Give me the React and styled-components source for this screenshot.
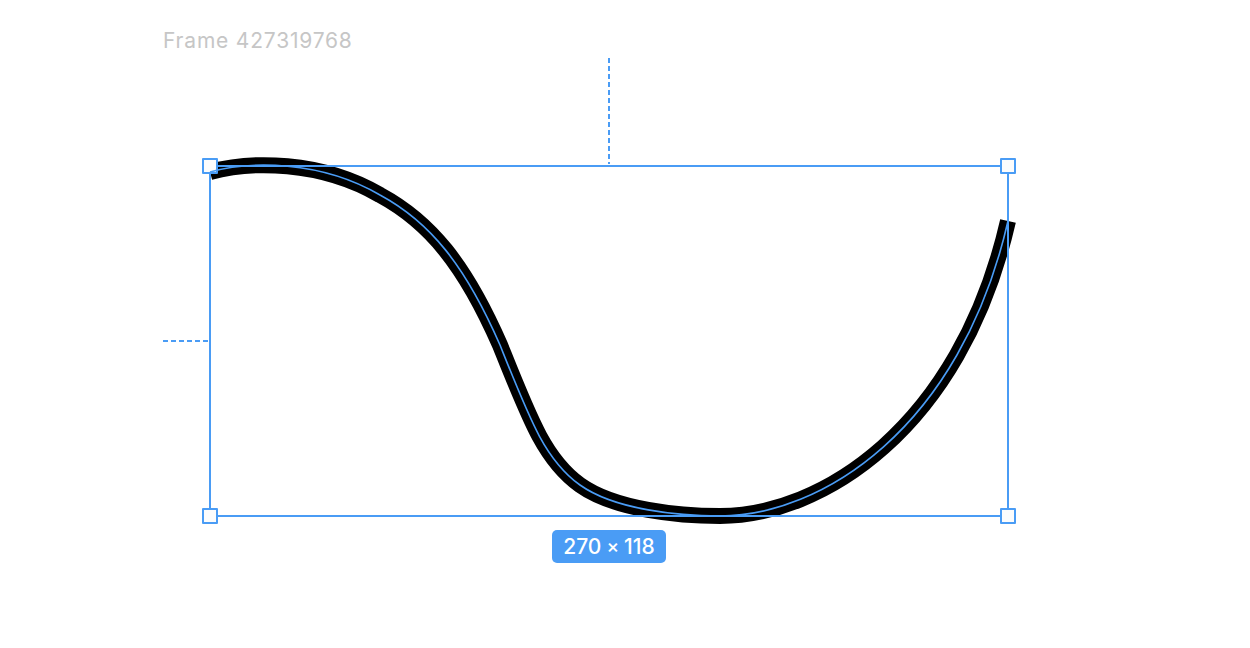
import styled, { createGlobalStyle } from "styled-components";

const BLUE = "#4a9cf5";

const GlobalStyle = createGlobalStyle`
  html, body {
    margin: 0;
    padding: 0;
    background: #ffffff;
  }
  body {
    font-family: Inter, "Open Sans", sans-serif;
  }
`;

/* Editor canvas: the label and the selected frame flow from its top-left padding */

const Canvas = styled.div`
  position: relative;
  width: 1250px;
  height: 648px;
  box-sizing: border-box;
  padding: 29px 0 0 163px;
  display: flex;
  flex-direction: column;
  gap: 5px;
  overflow: hidden;
  background: #ffffff;
`;

const FrameLabel = styled.div`
  font-size: 21px;
  line-height: 24px;
  letter-spacing: 0.8px;
  color: #c6c6c6;
  white-space: nowrap;
`;

/* The vector sits on the canvas at its own coordinates */
const Drawing = styled.svg`
  position: absolute;
  left: 0;
  top: 0;
  width: 1250px;
  height: 648px;
  pointer-events: none;
`;

/* guides | selection box | size badge */
const SelectionGroup = styled.div`
  display: grid;
  grid-template-columns: 46px 800px;
  grid-template-rows: 107px 352px auto;
`;

const Guide = styled.div`
  grid-column: ${(p) => (p.$vertical ? 2 : 1)};
  grid-row: ${(p) => (p.$vertical ? 1 : 2)};
  justify-self: ${(p) => (p.$vertical ? "center" : "start")};
  align-self: ${(p) => (p.$vertical ? "start" : "center")};
  width: ${(p) => (p.$vertical ? "1.5px" : "45px")};
  height: ${(p) => (p.$vertical ? "106px" : "1.5px")};
  background: repeating-linear-gradient(
    ${(p) => (p.$vertical ? "to bottom" : "to right")},
    ${BLUE} 0 5px,
    transparent 5px 8px
  );
`;

const SelectionBox = styled.div`
  grid-column: 2;
  grid-row: 2;
  position: relative;
  box-sizing: border-box;
  border: 2px solid ${BLUE};
`;

const Handle = styled.span`
  position: absolute;
  left: ${(p) => (p.$right ? "100%" : "0")};
  top: ${(p) => (p.$bottom ? "100%" : "0")};
  width: 16px;
  height: 16px;
  box-sizing: border-box;
  transform: translate(-50%, -50%);
  margin-left: ${(p) => (p.$right ? "1px" : "-1px")};
  margin-top: ${(p) => (p.$bottom ? "1px" : "-1px")};
  background: #fcfcfc;
  border: 2px solid ${BLUE};
  border-radius: 1px;
`;

const SizeBadge = styled.div`
  grid-column: 2;
  grid-row: 3;
  justify-self: center;
  margin-top: 13px;
  width: 114px;
  height: 33px;
  display: flex;
  align-items: center;
  justify-content: center;
  gap: 5px;
  border-radius: 5px;
  background: ${BLUE};
  color: #ffffff;
  font-size: 21px;
  font-weight: 500;
  white-space: nowrap;

  span {
    font-size: 19px;
  }
`;

const CURVE =
  "M 210 172 C 250 161, 320 160, 380 195 C 430 222, 465 265, 500 345 " +
  "C 530 420, 545 460, 580 485 C 615 510, 680 516, 720 516 " +
  "C 820 516, 960 430, 1008 221";

function App() {
  return (
    <>
      <GlobalStyle />
      <Canvas>
        <Drawing viewBox="0 0 1250 648">
          <path d={CURVE} fill="none" stroke="#000000" strokeWidth="16" strokeLinecap="butt" />
        </Drawing>
        <FrameLabel>Frame 427319768</FrameLabel>
        <SelectionGroup>
          <Guide $vertical />
          <Guide />
          <SelectionBox>
            <Handle />
            <Handle $right />
            <Handle $bottom />
            <Handle $right $bottom />
          </SelectionBox>
          <SizeBadge>
            270 <span>×</span> 118
          </SizeBadge>
        </SelectionGroup>
        <Drawing viewBox="0 0 1250 648">
          <path d={CURVE} fill="none" stroke={BLUE} strokeWidth="1.6" />
        </Drawing>
      </Canvas>
    </>
  );
}

export default App;
